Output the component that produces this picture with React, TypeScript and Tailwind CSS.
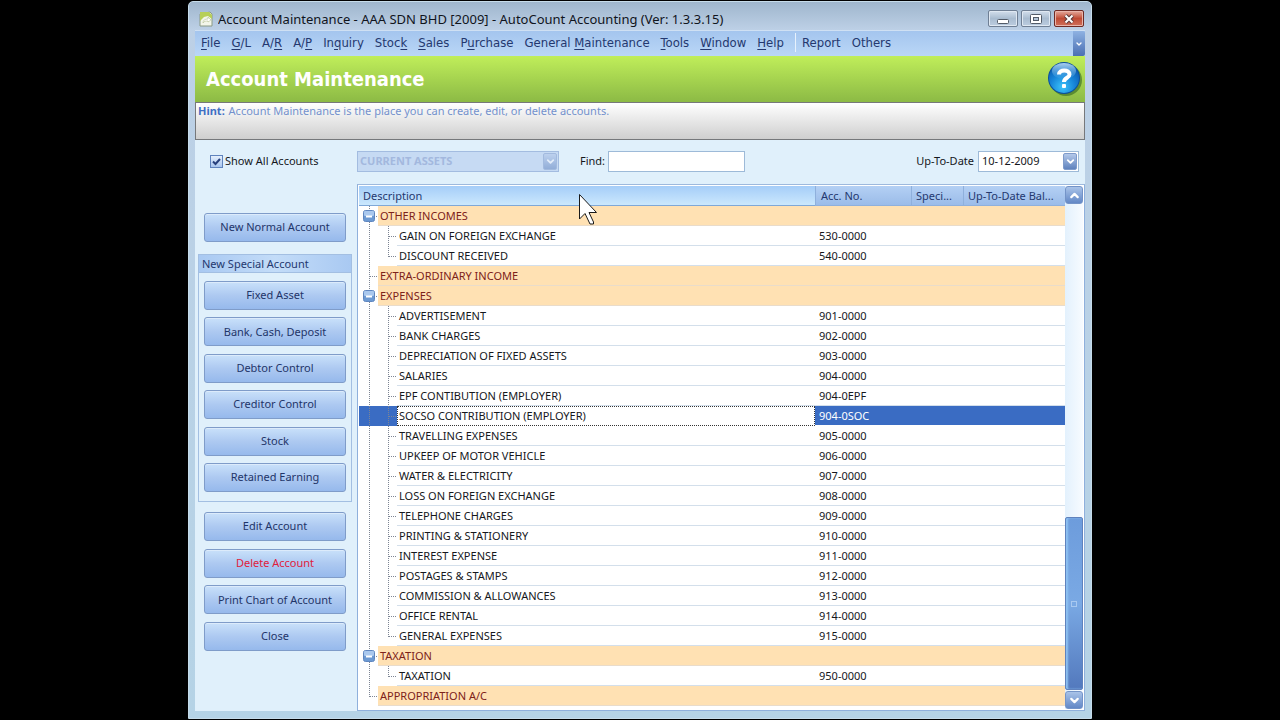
/**
 * Account Maintenance window
 *
 * Chart of accounts tree with the account actions on its left
 */

import React from 'react';
import { ChevronDown, ChevronUp } from 'lucide-react';

type Account = {
  name: string;
  no?: string;
  group?: boolean;
  expanded?: boolean;
  last?: boolean;
  selected?: boolean;
};

const accounts: Account[] = [
  { name: 'OTHER INCOMES', group: true, expanded: true },
  { name: 'GAIN ON FOREIGN EXCHANGE', no: '530-0000' },
  { name: 'DISCOUNT RECEIVED', no: '540-0000', last: true },
  { name: 'EXTRA-ORDINARY INCOME', group: true },
  { name: 'EXPENSES', group: true, expanded: true },
  { name: 'ADVERTISEMENT', no: '901-0000' },
  { name: 'BANK CHARGES', no: '902-0000' },
  { name: 'DEPRECIATION OF FIXED ASSETS', no: '903-0000' },
  { name: 'SALARIES', no: '904-0000' },
  { name: 'EPF CONTIBUTION (EMPLOYER)', no: '904-0EPF' },
  { name: 'SOCSO CONTRIBUTION (EMPLOYER)', no: '904-0SOC', selected: true },
  { name: 'TRAVELLING EXPENSES', no: '905-0000' },
  { name: 'UPKEEP OF MOTOR VEHICLE', no: '906-0000' },
  { name: 'WATER & ELECTRICITY', no: '907-0000' },
  { name: 'LOSS ON FOREIGN EXCHANGE', no: '908-0000' },
  { name: 'TELEPHONE CHARGES', no: '909-0000' },
  { name: 'PRINTING & STATIONERY', no: '910-0000' },
  { name: 'INTEREST EXPENSE', no: '911-0000' },
  { name: 'POSTAGES & STAMPS', no: '912-0000' },
  { name: 'COMMISSION & ALLOWANCES', no: '913-0000' },
  { name: 'OFFICE RENTAL', no: '914-0000' },
  { name: 'GENERAL EXPENSES', no: '915-0000', last: true },
  { name: 'TAXATION', group: true, expanded: true },
  { name: 'TAXATION', no: '950-0000', last: true },
  { name: 'APPROPRIATION A/C', group: true, last: true },
];

// [text before the access key, access key, text after it]
const menus: [string, string, string][] = [
  ['', 'F', 'ile'],
  ['', 'G', '/L'],
  ['A/', 'R', ''],
  ['A/', 'P', ''],
  ['In', 'q', 'uiry'],
  ['Stoc', 'k', ''],
  ['', 'S', 'ales'],
  ['P', 'u', 'rchase'],
  ['General ', 'M', 'aintenance'],
  ['', 'T', 'ools'],
  ['', 'W', 'indow'],
  ['', 'H', 'elp'],
];

const specialAccounts = [
  'Fixed Asset',
  'Bank, Cash, Deposit',
  'Debtor Control',
  'Creditor Control',
  'Stock',
  'Retained Earning',
];

function SideButton({ children, danger = false }: { children: React.ReactNode; danger?: boolean }) {
  return (
    <button
      className={`h-[29px] w-full shrink-0 rounded-[3px] border border-[#7f9cc9] bg-linear-to-b from-[#c9e1fa] via-[#adc9f1] to-[#96b9ec] shadow-[inset_0_1px_0_#dcebfb] ${
        danger ? 'text-[#e0203c]' : 'text-[#1f3569]'
      }`}
    >
      {children}
    </button>
  );
}

function DropButton({ label, faded = false }: { label: string; faded?: boolean }) {
  return (
    <button
      aria-label={label}
      disabled={faded}
      className={`flex h-[17px] w-[14px] shrink-0 items-center justify-center rounded-[2px] border border-[#7f9bca] bg-linear-to-b from-[#b4c9ea] to-[#5f82bd] text-white ${
        faded ? 'opacity-50' : ''
      }`}
    >
      <ChevronDown size={11} strokeWidth={4} />
    </button>
  );
}

// Dotted connector line of a nested row
function Guide({ to, stub = true }: { to: number; stub?: boolean }) {
  return (
    <svg width="19" height="20" className="shrink-0" stroke="#7d8594" strokeDasharray="1 1">
      <path d={`M10.5 0V${to}`} />
      {stub && <path d="M11 10.5H19" />}
    </svg>
  );
}

function GroupGuide({ account }: { account: Account }) {
  return (
    <svg width="19" height="20" className="shrink-0">
      <path
        d={`M10.5 0V${account.last ? 11 : 20}M11 10.5H19`}
        stroke="#7d8594"
        strokeDasharray="1 1"
      />
      {account.expanded && (
        <>
          <rect x="4.5" y="4.5" width="11" height="11" rx="2" fill="#6c9ad3" stroke="#5f86bf" />
          <rect x="5" y="5" width="10" height="5" rx="1" fill="#a9c8ee" />
          <path d="M7 10.5H13" stroke="#fff" strokeWidth="2" />
        </>
      )}
    </svg>
  );
}

function AccountRow({ account }: { account: Account }) {
  const { group, selected } = account;
  const cell = group
    ? 'bg-[#ffe1b3] border-b border-[#e9dccb]'
    : selected
      ? 'bg-[#3a6cc3] border-b border-white'
      : 'border-b border-[#d3dfeb]';
  const nameCell = selected
    ? 'border border-dotted border-[#333] bg-white pl-px leading-[17px]'
    : `pl-[2px] leading-[19px] ${cell}`;

  return (
    <tr className="h-5">
      <td className="p-0">
        <div className={`flex h-5 ${selected ? 'bg-[#3a6cc3]' : ''}`}>
          {group ? (
            <GroupGuide account={account} />
          ) : (
            <>
              <Guide to={20} stub={false} />
              <Guide to={account.last ? 11 : 20} />
            </>
          )}
          <div
            className={`flex-1 overflow-hidden whitespace-nowrap ${nameCell} ${
              group ? 'text-[#7d2219]' : ''
            }`}
          >
            {account.name}
          </div>
        </div>
      </td>
      <td className={`p-0 pl-[4px] leading-[19px] ${cell} ${selected ? 'text-white' : ''}`}>
        {account.no}
      </td>
      <td className={`p-0 ${cell}`} />
      <td className={`p-0 ${cell}`} />
    </tr>
  );
}

function TitleBar() {
  return (
    <header className="flex h-7 items-center rounded-t-[4px] bg-linear-to-b from-[#9fb6cd] to-[#bdd0e6] pt-[5px] pr-[7px] pl-[10px]">
      <svg width="14" height="16" viewBox="0 0 14 16">
        <path d="M1 3 11 1 13 3V15H1Z" fill="#f3f6ea" stroke="#8a9a86" />
        <path d="M1 1H10L13 4V8L9 5 5 6 1 10Z" fill="#b7cf58" />
        <path d="M4 12C4 9 6 8 9 8V6L12 9 9 11V10C7 10 5 10 4 12Z" fill="#fff" stroke="#a9b483" strokeWidth=".5" />
      </svg>
      <h1 className="ml-[5px] flex-1 truncate text-[13px] leading-5 text-[#10141c]">
        Account Maintenance - AAA SDN BHD [2009] - AutoCount Accounting (Ver: 1.3.3.15)
      </h1>
      <div className="flex gap-[3px]">
        <button
          aria-label="Minimize"
          className="flex h-[17px] w-[30px] items-center justify-center rounded-[2px] border border-[#6f7f94] bg-linear-to-b from-[#d3dfec] via-[#a9bcd0] to-[#bccde0] shadow-[inset_0_0_0_1px_#dfe8f2]"
        >
          <svg width="12" height="12">
            <rect x=".5" y="6.5" width="11" height="4" rx="1" fill="#fff" stroke="#525b68" />
          </svg>
        </button>
        <button
          aria-label="Restore"
          className="flex h-[17px] w-[30px] items-center justify-center rounded-[2px] border border-[#6f7f94] bg-linear-to-b from-[#d3dfec] via-[#a9bcd0] to-[#bccde0] shadow-[inset_0_0_0_1px_#dfe8f2]"
        >
          <svg width="12" height="12">
            <rect x=".5" y="1.5" width="11" height="9" rx="1" fill="#fff" stroke="#525b68" />
            <rect x="3.5" y="4.5" width="5" height="3" fill="#b4c5d8" stroke="#525b68" />
          </svg>
        </button>
        <button
          aria-label="Close window"
          className="flex h-[17px] w-[30px] items-center justify-center rounded-[2px] border border-[#6e2a24] bg-linear-to-b from-[#e4a99c] via-[#bf4a34] to-[#d0705a] shadow-[inset_0_0_0_1px_#e9b5aa]"
        >
          <svg width="12" height="10">
            <path d="M2.5 1.5 9.5 8.5M9.5 1.5 2.5 8.5" stroke="#5b3a3a" strokeWidth="4" />
            <path d="M2.5 1.5 9.5 8.5M9.5 1.5 2.5 8.5" stroke="#fff" strokeWidth="2" />
          </svg>
        </button>
      </div>
    </header>
  );
}

function MenuBar() {
  return (
    <nav
      className="flex h-[26px] items-stretch border-t border-[#cfe0f3] bg-linear-to-b from-[#a4c5ee] to-[#bad7f7] text-[13px] text-[#24386f]"
      style={{ fontFamily: '"DejaVu Sans Condensed", "DejaVu Sans", sans-serif' }}
    >
      <div className="flex flex-1 items-center gap-[11px] pb-[2px] pl-[6px] whitespace-nowrap">
        {menus.map(([before, key, after]) => (
          <button key={before + key + after}>
            {before}
            <u className="underline-offset-2">{key}</u>
            {after}
          </button>
        ))}
        <button className="border-l border-[#e7f1fc] pl-[6px]">Report</button>
        <button>Others</button>
      </div>
      <button
        aria-label="More menus"
        className="flex w-3 items-center justify-center rounded-r-[2px] bg-linear-to-b from-[#8fb2e2] to-[#4b70b3] text-white"
      >
        <ChevronDown size={8} strokeWidth={4} />
      </button>
    </nav>
  );
}

function HelpIcon() {
  return (
    <svg width="36" height="36" viewBox="0 0 36 36">
      <defs>
        <radialGradient id="help-ball" cx=".45" cy=".8" r=".75">
          <stop offset="0" stopColor="#3cc4fa" />
          <stop offset=".55" stopColor="#1684d8" />
          <stop offset="1" stopColor="#0b59ad" />
        </radialGradient>
        <linearGradient id="help-shine" x1="0" y1="0" x2="0" y2="1">
          <stop offset="0" stopColor="#d4efff" stopOpacity=".8" />
          <stop offset="1" stopColor="#6cc0f2" stopOpacity=".1" />
        </linearGradient>
      </defs>
      <circle cx="19" cy="19" r="16" fill="#2c5c1e" opacity=".55" />
      <circle cx="17" cy="17" r="16" fill="#0c4f9c" />
      <circle cx="17" cy="17" r="15" fill="url(#help-ball)" />
      <ellipse cx="17" cy="10" rx="12" ry="8" fill="url(#help-shine)" />
      <path
        d="M12 13.5C12 8 22.5 8 22.5 13.5C22.5 17 17 16.5 17 21"
        fill="none"
        stroke="#fff"
        strokeWidth="4"
      />
      <rect x="15" y="23" width="4" height="4" rx="1" fill="#fff" />
    </svg>
  );
}

export default function App() {
  return (
    <div
      className="min-h-screen bg-black px-[188px] pt-px text-[11px] text-[#15171c]"
      style={{ fontFamily: '"Noto Sans", "DejaVu Sans Condensed", sans-serif' }}
    >
      <div className="relative rounded-t-[5px] border border-[#c6dcea] bg-linear-to-b from-[#bdd0e6] to-[#b5d3e6]">
        <TitleBar />
        <div className="px-[6px] pb-[7px]">
          <MenuBar />

          {/* Page heading */}
          <div className="flex h-[46px] items-center justify-between bg-linear-to-b from-[#c0ee5a] to-[#8cba45] pr-[2px] pl-[11px]">
            <h2
              className="text-[20px] font-bold text-white"
              style={{ fontFamily: '"DejaVu Sans Condensed", "DejaVu Sans", sans-serif' }}
            >
              Account Maintenance
            </h2>
            <button aria-label="Help">
              <HelpIcon />
            </button>
          </div>
          <p className="h-[38px] border border-[#76787b] bg-linear-to-b from-white to-[#cfcfcf] pl-[2px] leading-4 text-[#7391cd]">
            <b className="mr-px text-[#3f6fc4]">Hint:</b> Account Maintenance is the place you can create,
            edit, or delete accounts.
          </p>

          <div className="bg-[#e0f0fb]">
            {/* Filters */}
            <div className="flex h-11 items-center pr-[6px] pb-[2px]">
              <label className="relative flex w-[162px] shrink-0 items-center gap-[2px] pl-[15px]">
                <input
                  type="checkbox"
                  defaultChecked
                  className="size-[13px] appearance-none border border-[#5f83bd] bg-linear-to-b from-[#e4effc] to-[#a9c6ef]"
                />
                <svg width="13" height="13" className="pointer-events-none absolute left-[15px]">
                  <path d="M3 6.5 5.5 9 10 4" fill="none" stroke="#27407c" strokeWidth="2" />
                </svg>
                Show All Accounts
              </label>
              <div className="flex h-[21px] w-[202px] shrink-0 items-center border border-[#a3bce0] bg-[#c6daf3] pr-px">
                <select
                  aria-label="Account type"
                  disabled
                  className="h-full flex-1 appearance-none pl-[2px] font-bold text-[#a3b8de] opacity-100"
                >
                  <option>CURRENT ASSETS</option>
                </select>
                <DropButton label="Open account types" faded />
              </div>
              <label htmlFor="find" className="pr-[3px] pl-[21px]">
                Find:
              </label>
              <input id="find" className="h-[21px] w-[137px] border border-[#9dbad8] bg-white px-1" />
              <label htmlFor="up-to-date" className="mr-1 ml-auto">
                Up-To-Date
              </label>
              <div className="flex h-[21px] w-[101px] items-center border border-[#9dbad8] bg-white pr-px">
                <input id="up-to-date" defaultValue="10-12-2009" className="w-0 flex-1 pl-[3px]" />
                <DropButton label="Pick a date" />
              </div>
            </div>

            <div className="flex">
              {/* Actions */}
              <aside className="w-[162px] shrink-0 pr-[5px] pl-[3px]">
                <div className="px-[6px] pt-[29px] pb-3">
                  <SideButton>New Normal Account</SideButton>
                </div>
                <section className="border border-[#a3bfe2] pb-[9px]">
                  <h3 className="h-[18px] border-b border-[#a3bfe2] bg-linear-to-r from-[#a9c9f2] via-[#c3dcf8] to-[#a9c9f2] pl-[3px] leading-[18px] text-[#24386f]">
                    New Special Account
                  </h3>
                  <div className="mt-2 flex h-[211px] flex-col justify-between px-[5px]">
                    {specialAccounts.map((name) => (
                      <SideButton key={name}>{name}</SideButton>
                    ))}
                  </div>
                </section>
                <div className="mt-[10px] flex h-[139px] flex-col justify-between px-[6px]">
                  <SideButton>Edit Account</SideButton>
                  <SideButton danger>Delete Account</SideButton>
                  <SideButton>Print Chart of Account</SideButton>
                  <SideButton>Close</SideButton>
                </div>
              </aside>

              {/* Accounts tree */}
              <div className="flex flex-1 border border-[#8fb0dc] border-t-[#9db9dd] bg-white p-px">
                <table className="mb-[3px] flex-1 table-fixed border-separate border-spacing-0 self-start text-left">
                  <colgroup>
                    <col />
                    <col className="w-24" />
                    <col className="w-[52px]" />
                    <col className="w-[102px]" />
                  </colgroup>
                  <thead className="text-[#24386f]">
                    <tr className="h-5">
                      <th className="border-b border-[#7fa8d8] bg-linear-to-b from-[#a5cdf8] to-[#cbe8fd] p-0 pl-[4px] leading-[19px] font-normal">
                        Description
                      </th>
                      <th className="border-b border-l border-[#8fb0dc] bg-linear-to-b from-[#b4d0f4] to-[#9bbce9] p-0 pl-[5px] leading-[19px] font-normal">
                        Acc. No.
                      </th>
                      <th className="truncate border-b border-l border-[#8fb0dc] bg-linear-to-b from-[#b4d0f4] to-[#9bbce9] p-0 pl-1 leading-[19px] font-normal">
                        Speci...
                      </th>
                      <th className="truncate border-b border-l border-[#8fb0dc] bg-linear-to-b from-[#b4d0f4] to-[#9bbce9] p-0 pl-1 leading-[19px] font-normal">
                        Up-To-Date Bal...
                      </th>
                    </tr>
                  </thead>
                  <tbody>
                    {accounts.map((account, i) => (
                      <AccountRow key={i} account={account} />
                    ))}
                  </tbody>
                </table>

                {/* Scroll bar */}
                <div className="flex w-[18px] shrink-0 flex-col bg-linear-to-r from-[#e3f1fd] to-[#f7fbff]">
                  <button
                    aria-label="Scroll up"
                    className="flex h-[18px] items-center justify-center rounded-[3px] border border-[#7494c8] bg-linear-to-b from-[#a9c3e8] to-[#6388c6] text-white"
                  >
                    <ChevronUp size={13} strokeWidth={4} />
                  </button>
                  <div className="flex-1" />
                  <div className="mb-px flex h-[33%] items-center justify-center rounded-[2px] border border-[#5f82bd] bg-linear-to-b from-[#6d9cdc] via-[#7aa9e4] to-[#5379bd] shadow-[inset_2px_0_2px_#8fc2f2]">
                    <span className="size-[6px] border border-[#a8c9f0]" />
                  </div>
                  <button
                    aria-label="Scroll down"
                    className="flex h-[18px] items-center justify-center rounded-[3px] border border-[#7494c8] bg-linear-to-b from-[#a9c3e8] to-[#6388c6] text-white"
                  >
                    <ChevronDown size={13} strokeWidth={4} />
                  </button>
                </div>
              </div>
            </div>
          </div>
        </div>

        {/* Mouse pointer */}
        <svg
          width="20"
          height="32"
          viewBox="0 0 20 32"
          className="pointer-events-none absolute top-[191px] left-[389px]"
        >
          <path
            d="M1.5 1.5V26L7 20.5 12 31H15.5V29L11 19.5H18.5Z"
            fill="#fff"
            stroke="#1a1a1a"
            strokeLinejoin="round"
          />
        </svg>
      </div>
    </div>
  );
}
